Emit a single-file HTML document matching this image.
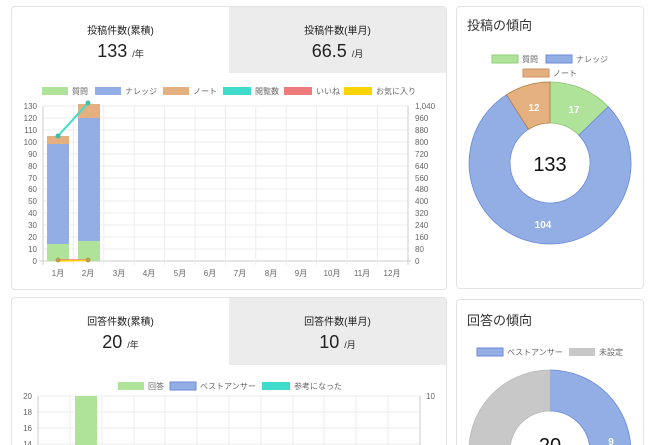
<!DOCTYPE html>
<html><head><meta charset="utf-8"><style>
html,body{margin:0;width:650px;height:445px;overflow:hidden}
body{background:#fff;font-family:"Liberation Sans","Noto Sans CJK JP",sans-serif;position:relative}
.card{position:absolute;border:1px solid #e3e3e3;border-radius:4px;background:#fff;box-sizing:border-box}
.stat{position:absolute;text-align:center;color:#222}
.stat .t{font-size:10px;margin-top:15px}
.stat .v{font-size:18px;margin-top:4px}
.stat .v small{font-size:9px}
.grey{background:#ececec}
svg{position:absolute;left:0;top:0}
svg text{font-family:"Liberation Sans","Noto Sans CJK JP",sans-serif}
</style></head><body>
<div class="card" style="left:11px;top:6px;width:436px;height:284px"></div>
<div class="stat" style="left:12px;top:7px;width:217px;height:66px"><div class="t">投稿件数(累積)</div><div class="v">133 <small>/年</small></div></div>
<div class="stat grey" style="left:229px;top:7px;width:217px;height:66px"><div class="t">投稿件数(単月)</div><div class="v">66.5 <small>/月</small></div></div>
<div class="card" style="left:11px;top:297px;width:436px;height:148px;border-bottom:none;border-radius:4px 4px 0 0"></div>
<div class="stat" style="left:12px;top:298px;width:217px;height:67px"><div class="t">回答件数(累積)</div><div class="v">20 <small>/年</small></div></div>
<div class="stat grey" style="left:229px;top:298px;width:217px;height:67px"><div class="t">回答件数(単月)</div><div class="v">10 <small>/月</small></div></div>
<div class="card" style="left:456px;top:6px;width:188px;height:283px"></div>
<div class="card" style="left:456px;top:299px;width:188px;height:146px;border-bottom:none;border-radius:4px 4px 0 0"></div>
<div style="position:absolute;left:467px;top:15px;font-size:13px;color:#333">投稿の傾向</div>
<div style="position:absolute;left:467px;top:310px;font-size:13px;color:#333">回答の傾向</div>
<svg width="650" height="445" viewBox="0 0 650 445">
<g font-size="8" fill="#666">
<rect x="42" y="87" width="26" height="8" fill="#b0e39a"/><text x="72" y="94">質問</text>
<rect x="95" y="87" width="26" height="8" fill="#93aee5"/><text x="125" y="94">ナレッジ</text>
<rect x="163" y="87" width="26" height="8" fill="#e5b080"/><text x="193" y="94">ノート</text>
<rect x="223" y="87" width="28" height="8" fill="#40dccb"/><text x="255" y="94">閲覧数</text>
<rect x="284" y="87" width="28" height="8" fill="#ee7b7b"/><text x="316" y="94">いいね</text>
<rect x="344" y="87" width="28" height="8" fill="#fed400"/><text x="376" y="94">お気に入り</text>
</g>
<g stroke="#ececec" stroke-width="1">
<line x1="43" y1="106" x2="408" y2="106"/><line x1="43" y1="118" x2="408" y2="118"/><line x1="43" y1="130" x2="408" y2="130"/><line x1="43" y1="142" x2="408" y2="142"/><line x1="43" y1="154" x2="408" y2="154"/><line x1="43" y1="166" x2="408" y2="166"/><line x1="43" y1="178" x2="408" y2="178"/><line x1="43" y1="189" x2="408" y2="189"/><line x1="43" y1="201" x2="408" y2="201"/><line x1="43" y1="213" x2="408" y2="213"/><line x1="43" y1="225" x2="408" y2="225"/><line x1="43" y1="237" x2="408" y2="237"/><line x1="43" y1="249" x2="408" y2="249"/><line x1="40" y1="261" x2="411" y2="261" stroke="#ccc"/>
<line x1="43" y1="106" x2="43" y2="265" stroke="#ccc"/><line x1="73.4" y1="106" x2="73.4" y2="265"/><line x1="103.8" y1="106" x2="103.8" y2="265"/><line x1="134.2" y1="106" x2="134.2" y2="265"/><line x1="164.6" y1="106" x2="164.6" y2="265"/><line x1="195" y1="106" x2="195" y2="265"/><line x1="225.4" y1="106" x2="225.4" y2="265"/><line x1="255.8" y1="106" x2="255.8" y2="265"/><line x1="286.2" y1="106" x2="286.2" y2="265"/><line x1="316.6" y1="106" x2="316.6" y2="265"/><line x1="347" y1="106" x2="347" y2="265"/><line x1="377.4" y1="106" x2="377.4" y2="265"/><line x1="408" y1="106" x2="408" y2="265" stroke="#ccc"/>
</g>
<g font-size="8" fill="#666" text-anchor="end">
<text x="37" y="109">130</text><text x="37" y="121">120</text><text x="37" y="133">110</text><text x="37" y="145">100</text><text x="37" y="157">90</text><text x="37" y="169">80</text><text x="37" y="181">70</text><text x="37" y="192">60</text><text x="37" y="204">50</text><text x="37" y="216">40</text><text x="37" y="228">30</text><text x="37" y="240">20</text><text x="37" y="252">10</text><text x="37" y="264">0</text>
</g>
<g font-size="8" fill="#666">
<text x="415" y="109">1,040</text><text x="415" y="121">960</text><text x="415" y="133">880</text><text x="415" y="145">800</text><text x="415" y="157">720</text><text x="415" y="169">640</text><text x="415" y="181">560</text><text x="415" y="192">480</text><text x="415" y="204">400</text><text x="415" y="216">320</text><text x="415" y="228">240</text><text x="415" y="240">160</text><text x="415" y="252">80</text><text x="415" y="264">0</text>
</g>
<g font-size="8" fill="#666" text-anchor="middle">
<text x="58" y="276">1月</text><text x="88" y="276">2月</text><text x="119" y="276">3月</text><text x="149" y="276">4月</text><text x="180" y="276">5月</text><text x="210" y="276">6月</text><text x="240" y="276">7月</text><text x="271" y="276">8月</text><text x="301" y="276">9月</text><text x="332" y="276">10月</text><text x="362" y="276">11月</text><text x="392" y="276">12月</text>
</g>
<rect x="47" y="244" width="22" height="17" fill="#b0e39a"/><rect x="47" y="144" width="22" height="100" fill="#93aee5"/><rect x="47" y="136" width="22" height="8" fill="#e5b080"/>
<rect x="78" y="241" width="22" height="20" fill="#b0e39a"/><rect x="78" y="118" width="22" height="123" fill="#93aee5"/><rect x="78" y="104" width="22" height="14" fill="#e5b080"/>
<line x1="58" y1="136" x2="88" y2="103" stroke="#40dccb" stroke-width="2"/><circle cx="58" cy="136" r="2.5" fill="#40c0a0"/><circle cx="88" cy="103" r="2.5" fill="#40c0a0"/>
<line x1="58" y1="260" x2="88" y2="260" stroke="#ee7b7b" stroke-width="1.5"/><line x1="58" y1="261" x2="88" y2="260.5" stroke="#fed400" stroke-width="1.5"/>
<circle cx="58" cy="260" r="2.5" fill="#b8a050"/><circle cx="88" cy="260" r="2.5" fill="#b8a050"/>
<g font-size="8" fill="#666">
<rect x="118" y="382" width="26" height="8" fill="#b0e39a"/><text x="148" y="389">回答</text>
<rect x="170" y="382" width="26" height="8" fill="#93aee5" stroke="#6a8ad8"/><text x="200" y="389">ベストアンサー</text>
<rect x="262" y="382" width="28" height="8" fill="#40dccb"/><text x="294" y="389">参考になった</text>
</g>
<g stroke="#ececec">
<line x1="38" y1="396" x2="420" y2="396"/><line x1="38" y1="412" x2="420" y2="412"/><line x1="38" y1="428" x2="420" y2="428"/><line x1="38" y1="444" x2="420" y2="444"/>
<line x1="38" y1="396" x2="38" y2="445" stroke="#ccc"/><line x1="70" y1="396" x2="70" y2="445"/><line x1="102" y1="396" x2="102" y2="445"/><line x1="134" y1="396" x2="134" y2="445"/><line x1="165" y1="396" x2="165" y2="445"/><line x1="197" y1="396" x2="197" y2="445"/><line x1="229" y1="396" x2="229" y2="445"/><line x1="261" y1="396" x2="261" y2="445"/><line x1="293" y1="396" x2="293" y2="445"/><line x1="324" y1="396" x2="324" y2="445"/><line x1="356" y1="396" x2="356" y2="445"/><line x1="388" y1="396" x2="388" y2="445"/><line x1="420" y1="396" x2="420" y2="445" stroke="#ccc"/>
</g>
<g font-size="8" fill="#666" text-anchor="end"><text x="32" y="399">20</text><text x="32" y="415">18</text><text x="32" y="431">16</text><text x="32" y="447">14</text></g>
<text x="426" y="399" font-size="8" fill="#666">10</text>
<rect x="75" y="396" width="22" height="49" fill="#b0e39a"/>
<g font-size="8" fill="#666">
<rect x="492" y="55" width="26" height="8" fill="#b0e39a" stroke="#8fd07a"/><text x="522" y="62">質問</text>
<rect x="546" y="55" width="26" height="8" fill="#93aee5" stroke="#6a8ad8"/><text x="576" y="62">ナレッジ</text>
<rect x="523" y="69" width="26" height="8" fill="#e5b080" stroke="#d09060"/><text x="553" y="76">ノート</text>
</g>
<path d="M550 82 A81 81 0 0 1 608.3 106.7 L578.8 135.2 A40 40 0 0 0 550 123Z" fill="#b0e39a" stroke="#8fc07a" stroke-width="0.8"/>
<path d="M608.3 106.7 A81 81 0 1 1 506.5 94.7 L528.5 129.3 A40 40 0 1 0 578.8 135.2Z" fill="#93aee5" stroke="#6a8ad8" stroke-width="0.8"/>
<path d="M506.5 94.7 A81 81 0 0 1 550 82 L550 123 A40 40 0 0 0 528.5 129.3Z" fill="#e5b080" stroke="#b07a40" stroke-width="0.8"/>
<g fill="#fff" font-size="10" font-weight="bold" text-anchor="middle"><text x="534" y="111">12</text><text x="574" y="113">17</text><text x="543" y="228">104</text></g>
<text x="550" y="171" font-size="20" text-anchor="middle" fill="#111">133</text>
<g font-size="8" fill="#666">
<rect x="477" y="348" width="26" height="8" fill="#93aee5" stroke="#6a8ad8"/><text x="507" y="355">ベストアンサー</text>
<rect x="569" y="348" width="26" height="8" fill="#c8c8c8"/><text x="599" y="355">未設定</text>
</g>
<path d="M550 370 A81 81 0 0 1 575 528 L562.4 489 A40 40 0 0 0 550 411Z" fill="#93aee5" stroke="#6a8ad8" stroke-width="0.8"/>
<path d="M575 528 A81 81 0 1 1 550 370 L550 411 A40 40 0 1 0 562.4 489Z" fill="#c8c8c8" stroke="#bbb" stroke-width="0.8"/>
<text x="611" y="445" font-size="10" font-weight="bold" fill="#fff" text-anchor="middle">9</text>
<text x="550" y="452" font-size="20" text-anchor="middle" fill="#111">20</text>
</svg>
</body></html>
